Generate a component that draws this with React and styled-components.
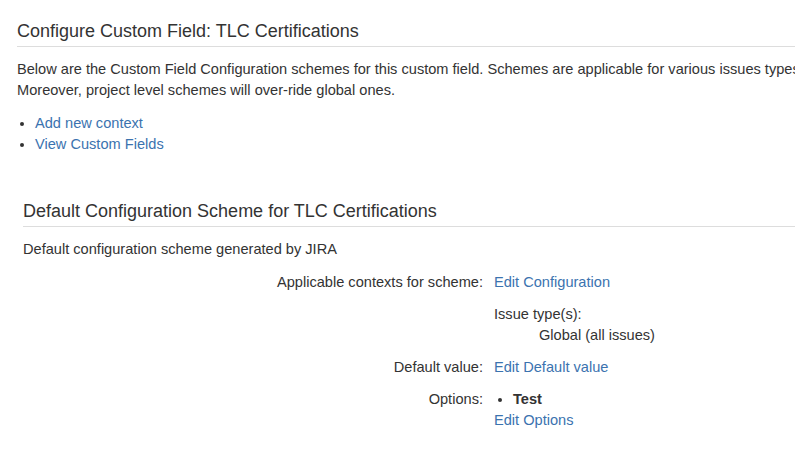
import React from "react";
import styled, { createGlobalStyle } from "styled-components";

const Global = createGlobalStyle`
  html, body {
    margin: 0;
    padding: 0;
    background: #ffffff;
    overflow: hidden;
  }
  body {
    font-family: "Liberation Sans", Arial, sans-serif;
    font-size: 14.6px;
    line-height: 21px;
    color: #333333;
  }
`;

const Page = styled.div`
  width: 1200px;
  padding: 0 0 0 17px;
  display: flow-root;
`;

const Heading = styled.h2`
  margin: 17px 0 0 0;
  padding: 0;
  font-size: 18px;
  font-weight: normal;
  line-height: 29px;
  color: #333333;
  border-bottom: 1px solid #dddddd;
`;

const Para = styled.p`
  margin: 12px 0 0 0;
`;

const LinkList = styled.ul`
  margin: 12px 0 0 0;
  padding-left: 18px;
  list-style: disc;
`;

const Link = styled.a`
  color: #3b73af;
  text-decoration: none;
  cursor: pointer;
`;

const Scheme = styled.section`
  display: flow-root;
  margin: 25px 0 0 6px;
`;

const Grid = styled.div`
  display: grid;
  grid-template-columns: 460px 1fr;
  column-gap: 11px;
  row-gap: 11px;
  margin-top: 12px;
`;

const Label = styled.div`
  text-align: right;
`;

const Value = styled.div``;

const SubBlock = styled.div`
  margin-top: 11px;
`;

const Indented = styled.div`
  padding-left: 45px;
`;

const OptionList = styled.ul`
  margin: 0;
  padding-left: 19px;
  list-style: disc;
  font-weight: bold;
`;

export default function App() {
  return (
    <>
      <Global />
      <Page>
        <Heading>Configure Custom Field: TLC Certifications</Heading>
        <Para>
          Below are the Custom Field Configuration schemes for this custom field. Schemes are applicable for various issues types and projects.
          <br />
          Moreover, project level schemes will over-ride global ones.
        </Para>
        <LinkList>
          <li><Link>Add new context</Link></li>
          <li><Link>View Custom Fields</Link></li>
        </LinkList>

        <Scheme>
          <Heading>Default Configuration Scheme for TLC Certifications</Heading>
          <Para>Default configuration scheme generated by JIRA</Para>
          <Grid>
            <Label>Applicable contexts for scheme:</Label>
            <Value>
              <Link>Edit Configuration</Link>
              <SubBlock>
                Issue type(s):
                <Indented>Global (all issues)</Indented>
              </SubBlock>
            </Value>
            <Label>Default value:</Label>
            <Value>
              <Link>Edit Default value</Link>
            </Value>
            <Label>Options:</Label>
            <Value>
              <OptionList>
                <li>Test</li>
              </OptionList>
              <Link>Edit Options</Link>
            </Value>
          </Grid>
        </Scheme>
      </Page>
    </>
  );
}
